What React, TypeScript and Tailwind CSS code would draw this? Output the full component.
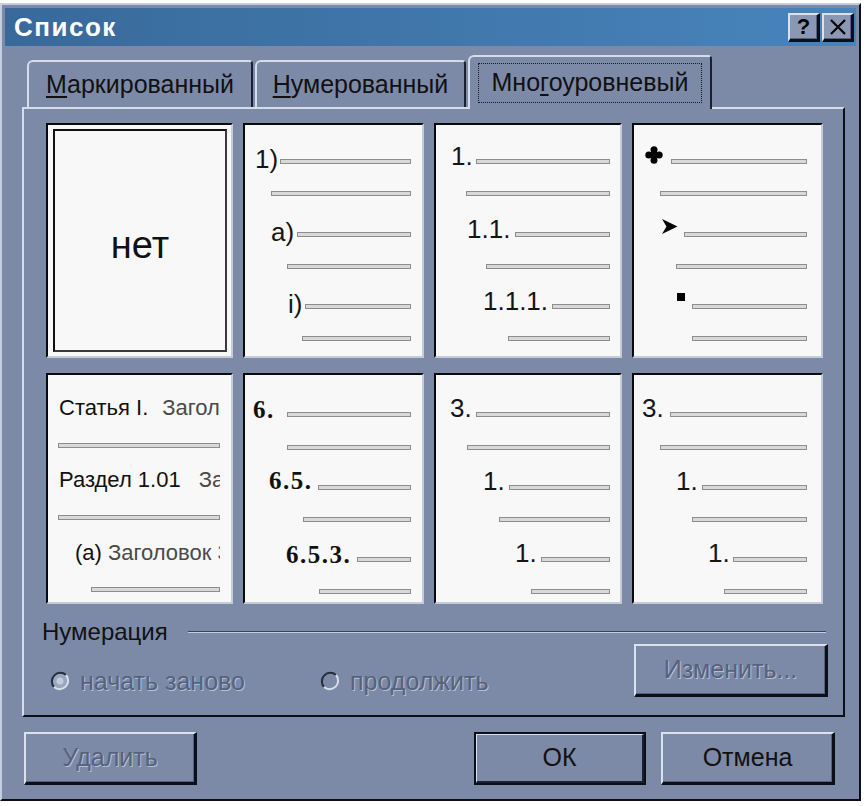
import type { ReactNode } from "react";

const UI = "font-['Liberation_Sans',Arial,sans-serif]";
const NUM = "text-[26px] leading-[24px] text-[#151515]";
const SERIF = "font-['Liberation_Serif','Times_New_Roman',serif] text-[25px] font-bold leading-[24px] tracking-[1.5px] text-[#111]";
const DISABLED = "text-[#56627c] [text-shadow:1px_1px_0_#b4bfd3]";
const RAISED =
  "border-t-2 border-l-2 border-r-[3px] border-b-[3px] border-t-[#dbe2ee] border-l-[#dbe2ee] border-r-[#0b0f18] border-b-[#0b0f18] shadow-[inset_-1px_-1px_0_#56627c]";

function Bar() {
  return <div className="h-[5px] min-w-0 flex-1 border border-[#8d8d8d] bg-[#d9d9d9]" />;
}

function Row({ cls, box, lift, label }: { cls: string; box?: string; lift?: string; label?: ReactNode }) {
  return (
    <div className={`flex h-[24px] shrink-0 items-center ${cls}`}>
      {label !== undefined && (
        <div className={`flex shrink-0 items-center whitespace-nowrap ${box} ${lift}`}>{label}</div>
      )}
      <Bar />
    </div>
  );
}

function Card({ cls, children }: { cls: string; children: ReactNode }) {
  return (
    <div
      className={`flex flex-col overflow-hidden border-2 border-t-[#0a0a0a] border-l-[#0a0a0a] border-r-[#c4ccda] border-b-[#c4ccda] bg-[#f8f8f8] ${cls}`}
    >
      {children}
    </div>
  );
}

function Clover() {
  return (
    <svg width="18" height="18" viewBox="0 0 18 18">
      <circle cx="9" cy="3.8" r="3.5" fill="#000" />
      <circle cx="3.8" cy="9" r="3.5" fill="#000" />
      <circle cx="14.2" cy="9" r="3.5" fill="#000" />
      <circle cx="9" cy="14.2" r="3.5" fill="#000" />
      <path d="M9 3 L15 9 L9 15 L3 9 Z" fill="#000" />
    </svg>
  );
}

function Arrow() {
  return (
    <svg width="17" height="17" viewBox="0 0 17 17">
      <path d="M1 1 L16.5 8.5 L1 16 L5.5 8.5 Z" fill="#000" />
    </svg>
  );
}

function Radio({ checked }: { checked?: boolean }) {
  return (
    <svg width="20" height="20" viewBox="0 0 20 20" className="shrink-0">
      <circle cx="10" cy="10" r="8.5" fill={checked ? "#9aa6bd" : "#7d8aa7"} />
      <path d="M4 16 A8.5 8.5 0 0 1 16 4" stroke="#252c3c" strokeWidth="2" fill="none" />
      <path d="M16 4 A8.5 8.5 0 0 1 4 16" stroke="#d8e0ec" strokeWidth="2" fill="none" />
      {checked && <circle cx="10" cy="10" r="3.5" fill="#c3ccdc" />}
    </svg>
  );
}

function TitleButton({ children }: { children: ReactNode }) {
  return (
    <div className={`flex h-[29px] w-[32px] items-center justify-center bg-[#8b98b3] ${RAISED}`}>
      {children}
    </div>
  );
}

export default function App() {
  return (
    <div className={`h-[806px] w-[868px] bg-white pt-[3px] ${UI}`}>
      <div className="flex h-[798px] w-[861px] flex-col border-2 border-t-[#c5cee0] border-l-[#c5cee0] border-r-[#0b0f18] border-b-[#0b0f18] bg-[#7d8aa7] p-[3px]">
        {/* title bar */}
        <div className="flex h-[38px] shrink-0 items-center bg-linear-to-r from-[#39699b] via-[#4077ab] to-[#4784bb] pl-[9px] pr-[2px]">
          <span className="text-[26px] font-bold tracking-[1.5px] text-white">Список</span>
          <div className="ml-auto flex gap-[2px]">
            <TitleButton>
              <span className="text-[22px] font-bold leading-none text-black">?</span>
            </TitleButton>
            <TitleButton>
              <svg width="18" height="18" viewBox="0 0 18 18">
                <path d="M2 2 L16 16 M16 2 L2 16" stroke="#000" strokeWidth="2.2" />
              </svg>
            </TitleButton>
          </div>
        </div>

        {/* tabs */}
        <div className="ml-[22px] mt-[9px] flex h-[52px] shrink-0 items-end">
          <div className="flex h-[47px] w-[226px] items-center justify-center rounded-tl-[6px] rounded-tr-[4px] border-t-2 border-l-2 border-r-2 border-t-[#d5dcea] border-l-[#d5dcea] border-r-[#1a2030] text-[25px] text-[#111]">
            <span>
              <span className="underline underline-offset-[3px]">М</span>аркированный
            </span>
          </div>
          <div className="ml-[2px] flex h-[47px] w-[211px] items-center justify-center rounded-tl-[6px] rounded-tr-[4px] border-t-2 border-l-2 border-r-2 border-t-[#d5dcea] border-l-[#d5dcea] border-r-[#1a2030] text-[25px] text-[#111]">
            <span>
              <span className="underline underline-offset-[3px]">Н</span>умерованный
            </span>
          </div>
          <div className="relative z-10 -mb-[2px] ml-[2px] h-[54px] w-[244px] rounded-tl-[6px] rounded-tr-[4px] border-t-2 border-l-2 border-r-2 border-t-[#d5dcea] border-l-[#d5dcea] border-r-[#1a2030] bg-[#7d8aa7] px-[8px] pt-[6px]">
            <div className="flex h-[40px] items-center justify-center border border-dotted border-[#1a1a1a] text-[25px] text-[#111]">
              <span>
                Мно<span className="underline underline-offset-[3px]">г</span>оуровневый
              </span>
            </div>
          </div>
        </div>

        {/* panel */}
        <div className="ml-[17px] flex w-[823px] shrink-0 flex-col border-2 border-t-[#d5dcea] border-l-[#d5dcea] border-r-[#0b0f18] border-b-[#0b0f18] pb-[18px]">
          <div className="ml-[22px] mt-[14px] grid grid-cols-[187px_181px_188px_191px] grid-rows-[235px_231px] gap-x-[10px] gap-y-[15px]">
            {/* none */}
            <div className="flex border-2 border-t-[#0a0a0a] border-l-[#0a0a0a] border-r-[#c4ccda] border-b-[#c4ccda] bg-[#f8f8f8] pb-[4px] pl-[5px] pr-[4px] pt-[4px]">
              <div className="flex flex-1 items-center justify-center border-2 border-t-[#111] border-l-[#111] border-r-[#3a3a3a] border-b-[#3a3a3a] pt-[10px] text-[38px] text-[#111]">
                нет
              </div>
            </div>

            <Card cls="pt-[24px] pr-[11px]">
              <Row cls="pl-[10px]" box="w-[25px]" lift="-mt-[5px]" label={<span className={NUM}>1)</span>} />
              <Row cls="mt-[8px] pl-[26px]" />
              <Row cls="mt-[17px] pl-[26px]" box="w-[26px]" lift="-mt-[4px]" label={<span className={NUM}>a)</span>} />
              <Row cls="mt-[8px] pl-[42px]" />
              <Row cls="mt-[16px] pl-[43px]" box="w-[17px]" lift="-mt-[4px]" label={<span className={NUM}>i)</span>} />
              <Row cls="mt-[8px] pl-[57px]" />
            </Card>

            <Card cls="pt-[24px] pr-[10px]">
              <Row cls="pl-[15px]" box="w-[25px]" lift="-mt-[11px]" label={<span className={NUM}>1.</span>} />
              <Row cls="mt-[8px] pl-[30px]" />
              <Row cls="mt-[17px] pl-[31px]" box="w-[48px]" lift="-mt-[11px]" label={<span className={NUM}>1.1.</span>} />
              <Row cls="mt-[8px] pl-[50px]" />
              <Row cls="mt-[16px] pl-[47px]" box="w-[69px]" lift="-mt-[11px]" label={<span className={NUM}>1.1.1.</span>} />
              <Row cls="mt-[8px] pl-[72px]" />
            </Card>

            <Card cls="pt-[24px] pr-[14px]">
              <Row cls="pl-[11px]" box="w-[26px]" lift="-mt-[13px]" label={<Clover />} />
              <Row cls="mt-[8px] pl-[26px]" />
              <Row cls="mt-[17px] pl-[27px]" box="w-[23px]" lift="-mt-[15px]" label={<Arrow />} />
              <Row cls="mt-[8px] pl-[42px]" />
              <Row
                cls="mt-[16px] pl-[43px]"
                box="w-[15px]"
                lift="-mt-[18px]"
                label={<div className="h-[8px] w-[8px] bg-black" />}
              />
              <Row cls="mt-[8px] pl-[58px]" />
            </Card>

            {/* headings */}
            <Card cls="pt-[21px] pr-[11px] text-[22px] leading-[24px]">
              <div className="flex h-[24px] shrink-0 overflow-hidden whitespace-nowrap pl-[11px] text-[#111]">
                Статья I.<span className="ml-[14px] text-[#4a4a4a]">Заголовок 1</span>
              </div>
              <Row cls="mt-[13px] pl-[10px]" />
              <div className="mt-[11px] flex h-[24px] shrink-0 overflow-hidden whitespace-nowrap pl-[11px] text-[#111]">
                Раздел 1.01<span className="ml-[18px] text-[#4a4a4a]">Заголовок 2</span>
              </div>
              <Row cls="mt-[13px] pl-[10px]" />
              <div className="mt-[12px] flex h-[24px] shrink-0 overflow-hidden whitespace-nowrap pl-[27px] text-[#111]">
                (а)<span className="ml-[6px] text-[#4a4a4a]">Заголовок 3</span>
              </div>
              <Row cls="mt-[12px] pl-[43px]" />
            </Card>

            <Card cls="pt-[27px] pr-[11px]">
              <Row cls="pl-[8px]" box="w-[34px]" lift="-mt-[8px]" label={<span className={SERIF}>6.</span>} />
              <Row cls="mt-[9px] pl-[42px]" />
              <Row cls="mt-[16px] pl-[24px]" box="w-[49px]" lift="-mt-[12px]" label={<span className={SERIF}>6.5.</span>} />
              <Row cls="mt-[8px] pl-[58px]" />
              <Row cls="mt-[16px] pl-[41px]" box="w-[71px]" lift="-mt-[9px]" label={<span className={SERIF}>6.5.3.</span>} />
              <Row cls="mt-[8px] pl-[74px]" />
            </Card>

            <Card cls="pt-[27px] pr-[10px]">
              <Row cls="pl-[14px]" box="w-[26px]" lift="-mt-[13px]" label={<span className={NUM}>3.</span>} />
              <Row cls="mt-[9px] pl-[31px]" />
              <Row cls="mt-[16px] pl-[47px]" box="w-[26px]" lift="-mt-[13px]" label={<span className={NUM}>1.</span>} />
              <Row cls="mt-[8px] pl-[63px]" />
              <Row cls="mt-[16px] pl-[79px]" box="w-[26px]" lift="-mt-[13px]" label={<span className={NUM}>1.</span>} />
              <Row cls="mt-[8px] pl-[95px]" />
            </Card>

            <Card cls="pt-[27px] pr-[14px]">
              <Row cls="pl-[8px]" box="w-[28px]" lift="-mt-[13px]" label={<span className={NUM}>3.</span>} />
              <Row cls="mt-[9px] pl-[26px]" />
              <Row cls="mt-[16px] pl-[42px]" box="w-[26px]" lift="-mt-[13px]" label={<span className={NUM}>1.</span>} />
              <Row cls="mt-[8px] pl-[58px]" />
              <Row cls="mt-[16px] pl-[74px]" box="w-[25px]" lift="-mt-[13px]" label={<span className={NUM}>1.</span>} />
              <Row cls="mt-[8px] pl-[90px]" />
            </Card>
          </div>

          {/* numbering */}
          <div className="ml-[18px] mr-[17px] mt-[15px] flex h-[26px] items-center">
            <span className="text-[24px] leading-[26px] text-[#111]">Нумерация</span>
            <div className="ml-[20px] h-[2px] flex-1 border-t border-b border-t-[#3a445a] border-b-[#c4cde0]" />
          </div>
          <div className="-mt-[1px] flex h-[53px] items-start">
            <div className="ml-[26px] mt-[23px] flex w-[270px] items-center">
              <Radio checked />
              <span className={`ml-[10px] text-[25px] leading-[28px] ${DISABLED}`}>начать заново</span>
            </div>
            <div className="mt-[23px] flex items-center">
              <Radio />
              <span className={`ml-[10px] text-[25px] leading-[28px] ${DISABLED}`}>продолжить</span>
            </div>
            <div
              className={`ml-auto mr-[15px] flex h-[53px] w-[194px] items-center justify-center text-[25px] ${DISABLED} ${RAISED}`}
            >
              Изменить...
            </div>
          </div>
        </div>

        {/* dialog buttons */}
        <div className="mt-[15px] flex">
          <div
            className={`ml-[19px] flex h-[53px] w-[173px] items-center justify-center text-[25px] ${DISABLED} ${RAISED}`}
          >
            Удалить
          </div>
          <div className="ml-auto flex h-[53px] w-[172px] border-2 border-[#0b0f18]">
            <div className="flex flex-1 items-center justify-center border-t border-l border-r-2 border-b-2 border-t-[#dbe2ee] border-l-[#dbe2ee] border-r-[#1a2030] border-b-[#1a2030] text-[25px] text-[#111]">
              ОК
            </div>
          </div>
          <div
            className={`ml-[15px] mr-[21px] flex h-[53px] w-[174px] items-center justify-center text-[25px] text-[#111] ${RAISED}`}
          >
            Отмена
          </div>
        </div>
      </div>
    </div>
  );
}
